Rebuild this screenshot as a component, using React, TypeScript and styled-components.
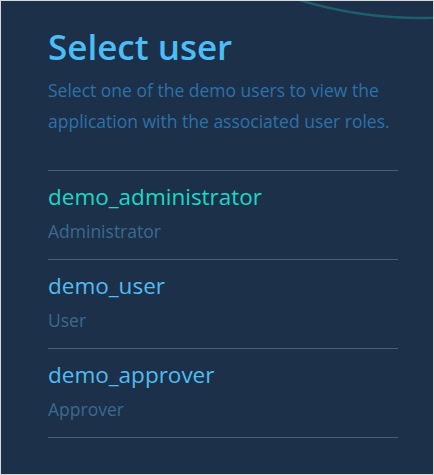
import React from "react";
import styled, { createGlobalStyle } from "styled-components";

const Global = createGlobalStyle`
  html, body { margin: 0; padding: 0; background: #dcdcdc; }
  * { box-sizing: border-box; }
`;

const Panel = styled.div`
  position: relative;
  width: 434px;
  height: 475px;
  border: 1px solid #d8d8d8;
  background: #1c3049;
  overflow: hidden;
  font-family: "Open Sans", "Noto Sans", sans-serif;
  padding: 24px 35px 0 47px;
`;

const Arc = styled.svg`
  position: absolute;
  top: 0;
  right: 0;
  pointer-events: none;
`;

const Title = styled.h1`
  margin: 0;
  font-size: 35px;
  line-height: 44px;
  font-weight: 600;
  color: #4dbdf5;
`;

const Subtitle = styled.p`
  margin: 6px 0 33px;
  font-size: 17.5px;
  line-height: 31px;
  color: #2c72aa;
`;

const List = styled.ul`
  list-style: none;
  margin: 0;
  padding: 0;
  border-top: 1px solid #4a6079;
`;

const Item = styled.li`
  display: flex;
  flex-direction: column;
  gap: 6px;
  padding: 11px 0 15px;
  border-bottom: 1px solid #4a6079;
`;

const Name = styled.span<{ $active?: boolean }>`
  font-size: 22.5px;
  line-height: 30px;
  color: ${(p) => (p.$active ? "#1bd9c6" : "#52bdf0")};
`;

const Role = styled.span`
  font-size: 17.5px;
  line-height: 26px;
  color: #3a6a90;
`;

const users = [
  { name: "demo_administrator", role: "Administrator", active: true },
  { name: "demo_user", role: "User" },
  { name: "demo_approver", role: "Approver" },
];

export default function App() {
  return (
    <>
      <Global />
      <Panel>
        <Arc width="160" height="30" viewBox="0 0 160 30">
          <circle
            cx={148}
            cy={-403}
            r={420}
            fill="none"
            stroke="#1e5f6d"
            strokeWidth={2.5}
          />
        </Arc>
        <Title>Select user</Title>
        <Subtitle>
          Select one of the demo users to view the application with the
          associated user roles.
        </Subtitle>
        <List>
          {users.map((u) => (
            <Item key={u.name}>
              <Name $active={u.active}>{u.name}</Name>
              <Role>{u.role}</Role>
            </Item>
          ))}
        </List>
      </Panel>
    </>
  );
}
